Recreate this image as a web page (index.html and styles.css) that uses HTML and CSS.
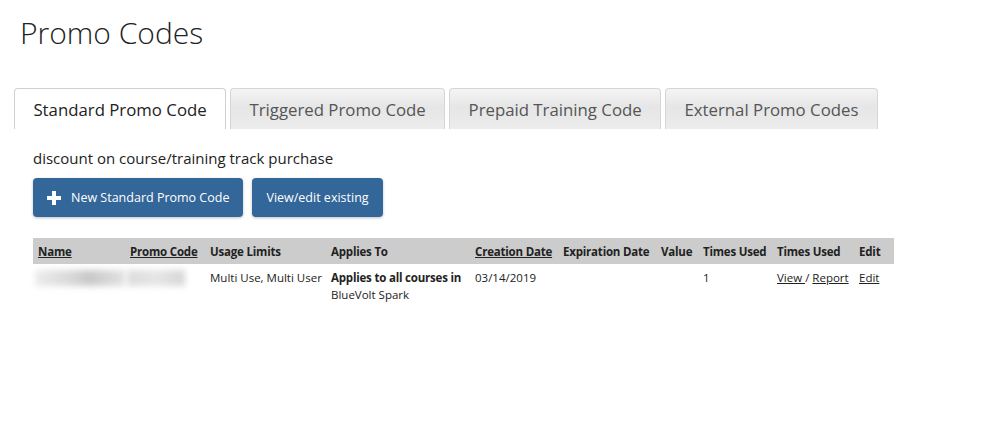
FILE: index.html
```html
<!DOCTYPE html>
<html>
<head>
    <title>Promo Codes</title>
    <link rel="stylesheet" href="styles.css">
</head>
<body>
    <div class="page">
        <h1 class="title">Promo Codes</h1>

        <ul class="tabs">
            <li class="tab active">Standard Promo Code</li>
            <li class="tab">Triggered Promo Code</li>
            <li class="tab">Prepaid Training Code</li>
            <li class="tab">External Promo Codes</li>
        </ul>

        <div class="panel">
            <p class="desc">discount on course/training track purchase</p>
            <div class="actions">
                <button class="btn">
                    <svg class="plus" width="14" height="14" viewBox="0 0 14 14">
                        <path d="M5 0h4v5h5v4H9v5H5V9H0V5h5z" fill="#fff"/>
                    </svg>
                    New Standard Promo Code
                </button>
                <button class="btn">View/edit existing</button>
            </div>

            <table class="codes">
                <colgroup>
                    <col style="width:92px">
                    <col style="width:80px">
                    <col style="width:121px">
                    <col style="width:144px">
                    <col style="width:88px">
                    <col style="width:98px">
                    <col style="width:42px">
                    <col style="width:74px">
                    <col style="width:82px">
                    <col style="width:40px">
                </colgroup>
                <thead>
                    <tr>
                        <th><a href="#">Name</a></th>
                        <th><a href="#">Promo Code</a></th>
                        <th>Usage Limits</th>
                        <th>Applies To</th>
                        <th><a href="#">Creation Date</a></th>
                        <th>Expiration Date</th>
                        <th>Value</th>
                        <th>Times Used</th>
                        <th>Times Used</th>
                        <th>Edit</th>
                    </tr>
                </thead>
                <tbody>
                    <tr>
                        <td><div class="blur blur-name"></div></td>
                        <td><div class="blur blur-code"></div></td>
                        <td>Multi Use, Multi User</td>
                        <td><b>Applies to all courses in</b><br>BlueVolt Spark</td>
                        <td>03/14/2019</td>
                        <td></td>
                        <td></td>
                        <td>1</td>
                        <td><a href="#">View </a>/ <a href="#">Report</a></td>
                        <td><a href="#">Edit</a></td>
                    </tr>
                </tbody>
            </table>
        </div>
    </div>
</body>
</html>
```

FILE: styles.css
```css
body {
    margin: 0;
    font-family: "Open Sans", "Noto Sans", sans-serif;
    color: #222;
    background: #fff;
}
.page {
    padding: 13px 14px 0 14px;
}
.title {
    margin: 0 0 40px 6px;
    font-size: 30px;
    font-weight: 300;
    color: #222;
    height: 35px;
    line-height: 40px;
}
.tabs {
    display: flex;
    gap: 4px;
    list-style: none;
    margin: 0;
    padding: 0;
}
.tab {
    height: 41px;
    box-sizing: border-box;
    padding: 0 18.4px;
    display: flex;
    align-items: center;
    font-size: 16.8px;
    color: #555;
    border: 1px solid #d6d6d6;
    border-bottom: none;
    border-radius: 4px 4px 0 0;
    background: linear-gradient(#f4f4f4, #e6e6e6 45%, #ececec);
}
.tab.active {
    background: #fff;
    color: #222;
    border-color: #cfcfcf;
}
.panel {
    padding: 0 19px;
}
.desc {
    margin: 19px 0 10px 0;
    font-size: 15px;
    color: #222;
}
.actions {
    display: flex;
    gap: 9px;
}
.btn {
    height: 39px;
    padding: 0 14px;
    background-color: #336699;
    color: #fff;
    border: none;
    border-radius: 4px;
    font-family: inherit;
    font-size: 12.5px;
    display: flex;
    align-items: center;
    gap: 10px;
    box-shadow: 0 1px 3px rgba(0,0,0,0.25);
    cursor: pointer;
}
.codes {
    margin-top: 21px;
    border-collapse: collapse;
    table-layout: fixed;
    width: 861px;
    font-size: 11.5px;
}
.codes th {
    background-color: #cccccc;
    text-align: left;
    font-weight: bold;
    height: 26px;
    padding: 0 5px;
    white-space: nowrap;
    color: #222;
    letter-spacing: -0.2px;
}
.codes td {
    vertical-align: top;
    padding: 5px 5px;
    line-height: 17px;
    white-space: nowrap;
    color: #222;
}
.codes td b {
    letter-spacing: -0.2px;
}
.codes a {
    color: #222;
    text-decoration: underline;
}
.blur {
    height: 16px;
    filter: blur(3px);
    margin-top: 1px;
}
.blur-name {
    width: 90px;
    margin-left: -3px;
    background: linear-gradient(90deg, #ececec, #d8d8d8 40%, #c8c8c8 60%, #e2e2e2);
}
.blur-code {
    width: 58px;
    margin-left: -3px;
    background: linear-gradient(90deg, #dcdcdc, #e6e6e6 50%, #d6d6d6);
}
```
